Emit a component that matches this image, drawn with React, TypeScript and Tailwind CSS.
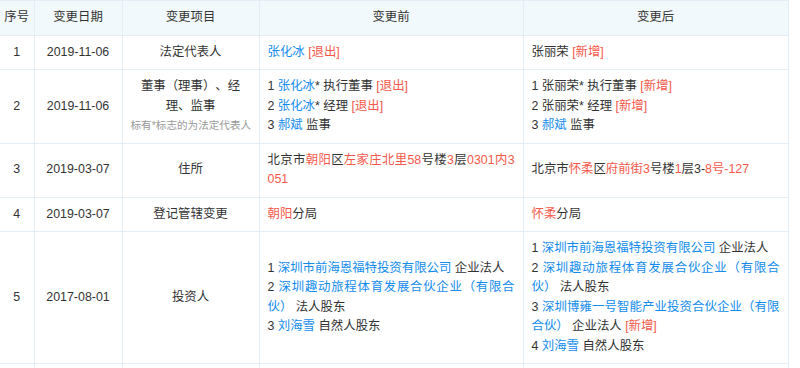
type Seg = [string, ("b" | "r")?];
type Line = Seg[];

interface ChangeRow {
  no: number;
  date: string;
  item: string[];
  note?: string;
  before: Line[];
  after: Line[];
}

const rows: ChangeRow[] = [
  {
    no: 1,
    date: "2019-11-06",
    item: ["法定代表人"],
    before: [[["张化冰", "b"], [" "], ["[退出]", "r"]]],
    after: [[["张丽荣 "], ["[新增]", "r"]]],
  },
  {
    no: 2,
    date: "2019-11-06",
    item: ["董事（理事）、经理、监事"],
    note: "标有*标志的为法定代表人",
    before: [
      [["1 "], ["张化冰", "b"], ["* 执行董事 "], ["[退出]", "r"]],
      [["2 "], ["张化冰", "b"], ["* 经理 "], ["[退出]", "r"]],
      [["3 "], ["郝斌", "b"], [" 监事"]],
    ],
    after: [
      [["1 张丽荣* 执行董事 "], ["[新增]", "r"]],
      [["2 张丽荣* 经理 "], ["[新增]", "r"]],
      [["3 "], ["郝斌", "b"], [" 监事"]],
    ],
  },
  {
    no: 3,
    date: "2019-03-07",
    item: ["住所"],
    before: [
      [
        ["北京市"],
        ["朝阳", "r"],
        ["区"],
        ["左家庄北里58", "r"],
        ["号楼"],
        ["3", "r"],
        ["层"],
        ["0301", "r"],
        ["内3051", "r"],
      ],
    ],
    after: [
      [
        ["北京市"],
        ["怀柔", "r"],
        ["区"],
        ["府前街3", "r"],
        ["号楼"],
        ["1", "r"],
        ["层3-"],
        ["8号-127", "r"],
      ],
    ],
  },
  {
    no: 4,
    date: "2019-03-07",
    item: ["登记管辖变更"],
    before: [[["朝阳", "r"], ["分局"]]],
    after: [[["怀柔", "r"], ["分局"]]],
  },
  {
    no: 5,
    date: "2017-08-01",
    item: ["投资人"],
    before: [
      [["1 "], ["深圳市前海恩福特投资有限公司", "b"], [" 企业法人"]],
      [["2 "], ["深圳趣动旅程体育发展合伙企业（有限合伙）", "b"], [" 法人股东"]],
      [["3 "], ["刘海雪", "b"], [" 自然人股东"]],
    ],
    after: [
      [["1 "], ["深圳市前海恩福特投资有限公司", "b"], [" 企业法人"]],
      [["2 "], ["深圳趣动旅程体育发展合伙企业（有限合伙）", "b"], [" 法人股东"]],
      [["3 "], ["深圳博雍一号智能产业投资合伙企业（有限合伙）", "b"], [" 企业法人 "], ["[新增]", "r"]],
      [["4 "], ["刘海雪", "b"], [" 自然人股东"]],
    ],
  },
];

function Lines({ lines }: { lines: Line[] }) {
  return (
    <>
      {lines.map((line, i) => (
        <span key={i}>
          {i > 0 && <br />}
          {line.map(([text, tone], j) => (
            <span
              key={j}
              className={tone === "b" ? "text-[#128bed]" : tone === "r" ? "text-[#f5584a]" : ""}
            >
              {text}
            </span>
          ))}
        </span>
      ))}
    </>
  );
}

// 表头 / 单元格
const cell = "border border-[#e4eef6] py-[7px]";
const th = cell + " bg-[#f2f9fc] font-normal text-center";
const td = cell + " align-middle";

export default function App() {
  return (
    <div className="w-[800px] h-[368px] overflow-hidden bg-white">
      <table
        className="table-fixed border-collapse w-[788px] text-[12.4px] leading-[19.5px] text-[#333] [text-spacing-trim:space-all]"
        style={{ fontFamily: '"Liberation Sans", "Noto Sans CJK SC", sans-serif' }}
      >
        <colgroup>
          <col className="w-[34px]" />
          <col className="w-[88px]" />
          <col className="w-[137px]" />
          <col className="w-[264px]" />
          <col className="w-[265px]" />
        </colgroup>
        <thead>
          <tr>
            <th className={th + " border-l-0 px-0 whitespace-nowrap"}>序号</th>
            <th className={th + " px-2"}>变更日期</th>
            <th className={th + " px-2"}>变更项目</th>
            <th className={th + " px-2"}>变更前</th>
            <th className={th + " px-2"}>变更后</th>
          </tr>
        </thead>
        <tbody>
          {rows.map((r) => (
            <tr key={r.no}>
              <td className={td + " border-l-0 px-0 text-center"}>{r.no}</td>
              <td className={td + " px-1 text-center whitespace-nowrap"}>{r.date}</td>
              <td className={td + " px-2 text-center"}>
                {r.item.map((t) => (
                  <div key={t}>{t}</div>
                ))}
                {r.note && (
                  <div className="text-[10.6px] text-[#999] whitespace-nowrap">{r.note}</div>
                )}
              </td>
              <td className={td + " px-2 text-justify break-all"}>
                <Lines lines={r.before} />
              </td>
              <td className={td + " px-2 text-justify break-all"}>
                <Lines lines={r.after} />
              </td>
            </tr>
          ))}
          <tr>
            <td className={td + " border-l-0 h-[35px]"}></td>
            <td className={td}></td>
            <td className={td}></td>
            <td className={td}></td>
            <td className={td}></td>
          </tr>
        </tbody>
      </table>
    </div>
  );
}
